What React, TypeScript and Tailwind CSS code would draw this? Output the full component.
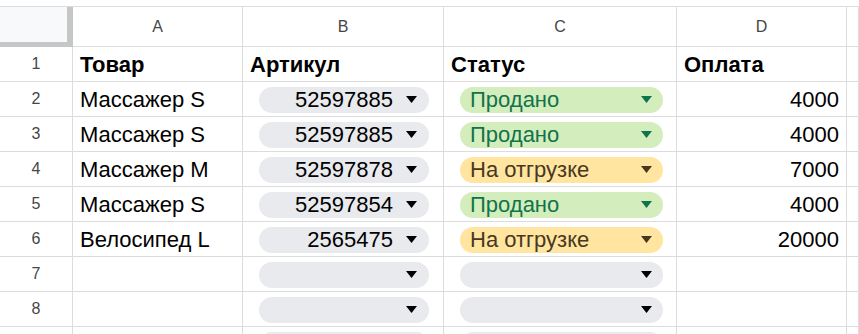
import React from "react";

type Status = "sold" | "shipping" | "empty";

const rows: { n: string; item: string; sku: string; status: Status; pay: string }[] = [
  { n: "2", item: "Массажер S", sku: "52597885", status: "sold", pay: "4000" },
  { n: "3", item: "Массажер S", sku: "52597885", status: "sold", pay: "4000" },
  { n: "4", item: "Массажер M", sku: "52597878", status: "shipping", pay: "7000" },
  { n: "5", item: "Массажер S", sku: "52597854", status: "sold", pay: "4000" },
  { n: "6", item: "Велосипед L", sku: "2565475", status: "shipping", pay: "20000" },
  { n: "7", item: "", sku: "", status: "empty", pay: "" },
  { n: "8", item: "", sku: "", status: "empty", pay: "" },
  // row 9 is cut off at the bottom edge, its number is not visible
  { n: "", item: "", sku: "", status: "empty", pay: "" },
];

const Arrow = ({ color }: { color: string }) => (
  <svg width="11" height="7" viewBox="0 0 11 7" className="shrink-0">
    <path d="M0 0 L11 0 L5.5 7 Z" fill={color} />
  </svg>
);

const cell = "h-[35px] border-r border-b border-[#dcdcdc] flex items-center";

export default function App() {
  return (
    <div className="w-[859px] h-[334px] overflow-hidden bg-white font-['Liberation_Sans',Arial,sans-serif] text-[22px] text-black">
      <div className="h-[6px]" />
      <div className="grid grid-cols-[73px_170px_201px_233px_170px_1fr] border-t border-[#dcdcdc]">
        {/* column headers */}
        <div className="h-[40px] bg-[#f8f9fa] border-r-[6px] border-b-[5px] border-[#c4c7c5]" />
        {["A", "B", "C", "D", ""].map((l, i) => (
          <div
            key={i}
            className="h-[40px] border-r border-b border-[#dcdcdc] flex items-center justify-center text-[16px] text-[#444746]"
          >
            {l}
          </div>
        ))}

        {/* row 1 */}
        <div className={`${cell} justify-center text-[16px] text-[#444746]`}>1</div>
        <div className={`${cell} px-[7px] font-bold`}>Товар</div>
        <div className={`${cell} px-[7px] font-bold`}>Артикул</div>
        <div className={`${cell} px-[7px] font-bold`}>Статус</div>
        <div className={`${cell} px-[7px] font-bold`}>Оплата</div>
        <div className={cell} />

        {rows.map((r, i) => (
          <React.Fragment key={i}>
            <div className={`${cell} justify-center text-[16px] text-[#444746]`}>{r.n}</div>
            <div className={`${cell} px-[7px]`}>{r.item}</div>
            <div className={`${cell} pl-[16px] pr-[14px] pt-[1px]`}>
              <div className="h-[26px] w-full rounded-full bg-[#e8eaed] flex items-center justify-end gap-[13px] pr-[12px]">
                <span>{r.sku}</span>
                <Arrow color="#000000" />
              </div>
            </div>
            <div className={`${cell} pl-[16px] pr-[13px] pt-[1px]`}>
              {r.status === "sold" && (
                <div className="h-[26px] w-full rounded-full bg-[#d4edbc] text-[#11734b] flex items-center justify-between pl-[10px] pr-[11px]">
                  <span>Продано</span>
                  <Arrow color="#11734b" />
                </div>
              )}
              {r.status === "shipping" && (
                <div className="h-[26px] w-full rounded-full bg-[#ffe5a0] text-[#473821] flex items-center justify-between pl-[10px] pr-[11px]">
                  <span>На отгрузке</span>
                  <Arrow color="#473821" />
                </div>
              )}
              {r.status === "empty" && (
                <div className="h-[26px] w-full rounded-full bg-[#e8eaed] flex items-center justify-end pr-[11px]">
                  <Arrow color="#000000" />
                </div>
              )}
            </div>
            <div className={`${cell} justify-end px-[7px]`}>{r.pay}</div>
            <div className={cell} />
          </React.Fragment>
        ))}
      </div>
    </div>
  );
}
